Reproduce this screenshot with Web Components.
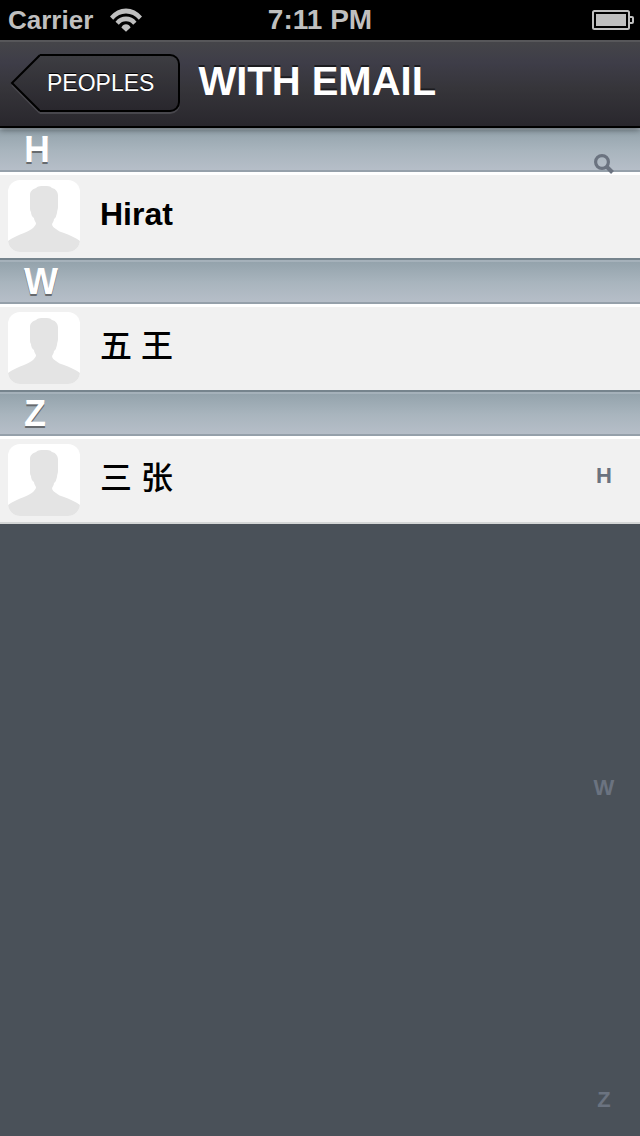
<!DOCTYPE html>
<html lang="en">
<head>
<meta charset="utf-8">
<meta name="viewport" content="width=device-width, initial-scale=1">
<title>With Email</title>
<style>
  body {
    margin: 0;
    background: #4a5159;
    font-family: "Liberation Sans", "Noto Sans CJK SC", sans-serif;
  }
</style>
</head>
<body>
<contacts-screen>
  <status-bar slot="status" carrier="Carrier" time="7:11 PM"></status-bar>
  <nav-bar slot="nav">
    <back-button slot="back">PEOPLES</back-button>
    WITH EMAIL
  </nav-bar>
  <contact-section id="section-h" letter="H">
    <contact-row>Hirat</contact-row>
  </contact-section>
  <contact-section id="section-w" letter="W">
    <contact-row lang="zh">五 王</contact-row>
  </contact-section>
  <contact-section id="section-z" letter="Z">
    <contact-row lang="zh">三 张</contact-row>
  </contact-section>
  <section-index slot="index" letters="HWZ"></section-index>
</contacts-screen>

<script>
class ContactsScreenElement extends HTMLElement {
  constructor() {
    super();
    this.attachShadow({ mode: 'open' });
    this.shadowRoot.innerHTML = `
      <style>
        :host {
          display: flex;
          flex-direction: column;
          min-height: 100vh;
        }

        header {
          position: relative;
          z-index: 1;
        }

        /* first section header tucks under the nav bar */
        main {
          flex: 1;
          position: relative;
          margin-top: -2px;
        }

        .list {
          border-bottom: 2px solid #d4d6d6;
        }
      </style>
      <header>
        <slot name="status"></slot>
        <slot name="nav"></slot>
      </header>
      <main>
        <div class="list"><slot></slot></div>
        <slot name="index"></slot>
      </main>
    `;
  }
}
customElements.define('contacts-screen', ContactsScreenElement);

class StatusBarElement extends HTMLElement {
  constructor() {
    super();
    this.attachShadow({ mode: 'open' });
    this.shadowRoot.innerHTML = `
      <style>
        :host {
          display: grid;
          grid-template-columns: 1fr auto 1fr;
          align-items: center;
          box-sizing: border-box;
          block-size: 40px;
          padding: 0 6px 2px;
          background: #000;
          color: #bfbfbf;
          font-weight: bold;
          line-height: 40px;
        }

        svg {
          display: block;
          fill: currentColor;
        }

        .left {
          display: flex;
          align-items: center;
          gap: 16px;
          padding-left: 2px;
          font-size: 26px;
        }

        #time {
          font-size: 28px;
        }

        .battery {
          justify-self: end;
        }
      </style>
      <div class="left">
        <span id="carrier"></span>
        <svg width="34" height="24" viewBox="0 0 34 24" aria-hidden="true">
          <path d="M1 8.500Q7.800 .5 17 .5T33 8.500L29.800 11.700Q24.500 5.500 17 5.500T4.200 11.700Z"/>
          <path d="M6.500 13.700Q10.800 8.600 17 8.600T27.500 13.700L24.200 16.700Q21.400 13.300 17 13.300T9.800 16.700Z"/>
          <path d="M12.400 19.500Q14 16.300 17 16.300T21.600 19.500L17 23.700Z"/>
        </svg>
      </div>
      <span id="time"></span>
      <svg class="battery" width="42" height="20" viewBox="0 0 42 20" aria-hidden="true">
        <rect x="1" y="1" width="36" height="18" rx="1.500" fill="none" stroke="currentColor" stroke-width="2"/>
        <rect x="4" y="4" width="30" height="12"/>
        <path d="M38 7h2q1 0 1 1v4q0 1-1 1h-2" fill="none" stroke="currentColor" stroke-width="2"/>
      </svg>
    `;
  }

  connectedCallback() {
    this.shadowRoot.querySelector('#carrier').textContent = this.getAttribute('carrier');
    this.shadowRoot.querySelector('#time').textContent = this.getAttribute('time');
  }
}
customElements.define('status-bar', StatusBarElement);

class NavBarElement extends HTMLElement {
  constructor() {
    super();
    this.attachShadow({ mode: 'open' });
    this.shadowRoot.innerHTML = `
      <style>
        :host {
          display: flex;
          align-items: center;
          gap: 18px;
          box-sizing: border-box;
          block-size: 88px;
          padding: 0 10px;
          border-top: 2px solid #57575a;
          border-bottom: 2px solid #000;
          background: linear-gradient(#454549, #3e3d48 25%, #36353a 55%, #29272d);
          box-shadow: 0 2px 6px rgba(0, 0, 0, .4);
        }

        h1 {
          margin: 0;
          padding-bottom: 6px;
          color: #fff;
          font-size: 40px;
          line-height: 44px;
          text-shadow: 0 -2px 0 #1c1c20;
          white-space: nowrap;
        }
      </style>
      <slot name="back"></slot>
      <h1><slot></slot></h1>
    `;
  }
}
customElements.define('nav-bar', NavBarElement);

class BackButtonElement extends HTMLElement {
  constructor() {
    super();
    this.attachShadow({ mode: 'open' });
    this.shadowRoot.innerHTML = `
      <style>
        :host {
          display: block;
        }

        button {
          display: flex;
          block-size: 60px;
          padding: 0;
          border: none;
          appearance: none;
          background: none;
          color: #fff;
          font: 23px "Liberation Sans", sans-serif;
          cursor: pointer;
        }

        svg {
          display: block;
        }

        .body {
          box-sizing: border-box;
          block-size: 58px;
          padding: 0 24px 0 7px;
          border: 2px solid #000;
          border-left: none;
          border-radius: 0 10px 10px 0;
          background: linear-gradient(#3d3d42, #29272d);
          box-shadow: 0 2px 0 #48474d;
          line-height: 54px;
          text-shadow: 0 -1px 0 #000;
        }
      </style>
      <button type="button">
        <svg width="30" height="60" viewBox="0 0 30 60" aria-hidden="true">
          <defs>
            <linearGradient id="fill" x2="0" y2="1">
              <stop stop-color="#3d3d42"/>
              <stop offset="1" stop-color="#29272d"/>
            </linearGradient>
          </defs>
          <path d="M2 31L30 59" fill="none" stroke="#48474d" stroke-width="2"/>
          <path d="M30 1L2 29L30 57" fill="url(#fill)" stroke="#000" stroke-width="2"/>
        </svg>
        <span class="body"><slot></slot></span>
      </button>
    `;
  }
}
customElements.define('back-button', BackButtonElement);

class ContactSectionElement extends HTMLElement {
  constructor() {
    super();
    this.attachShadow({ mode: 'open' });
    this.shadowRoot.innerHTML = `
      <style>
        :host {
          display: block;
        }

        h2 {
          box-sizing: border-box;
          block-size: 46px;
          margin: 0;
          padding: 0 24px;
          border-top: 2px solid #76848d;
          border-bottom: 2px solid #95a0aa;
          background: linear-gradient(#a5b1ba 2px, #94a3ac 2px, #a9b5be 55%, #b6bec8);
          color: #fff;
          font-size: 36px;
          line-height: 44px;
          text-shadow: 0 2px 0 #666a6e;
        }
      </style>
      <h2></h2>
      <div role="list"><slot></slot></div>
    `;
  }

  connectedCallback() {
    this.shadowRoot.querySelector('h2').textContent = this.getAttribute('letter');
  }
}
customElements.define('contact-section', ContactSectionElement);

class ContactRowElement extends HTMLElement {
  constructor() {
    super();
    this.attachShadow({ mode: 'open' });
    this.shadowRoot.innerHTML = `
      <style>
        :host {
          display: flex;
          align-items: center;
          gap: 20px;
          box-sizing: border-box;
          block-size: 86px;
          padding: 0 8px 2px;
          border-top: 3px solid #fff;
          background: #f1f1f1;
          color: #000;
          font-size: 32px;
          font-weight: bold;
          line-height: 36px;
        }

        :host(:lang(zh)) {
          font-weight: 500;
        }

        svg {
          display: block;
          border-radius: 12px;
          background: #fff;
        }

        .name {
          padding-bottom: 4px;
        }
      </style>
      <svg width="72" height="72" viewBox="0 0 72 72" aria-hidden="true">
        <path fill="#e4e4e4" d="M0 72V61C4 58 10 55 16 53C20 51 23 50 25 48C28 45 28 44 28 43C27 41 26 40 26 38C24 37 23 34 23 32C22 31 22 29 22 27V15C22 11 25 9 28 8C30 6 33 6 36 6C40 6 42 6 44 8C48 9 50 12 50 16V27C50 29 49 31 49 33C48 36 48 38 46 39C46 41 45 42 44 44C44 46 46 48 48 49C50 51 53 52 56 53C62 55 68 58 72 61V72Z"/>
      </svg>
      <span class="name"><slot></slot></span>
    `;
  }

  connectedCallback() {
    this.setAttribute('role', 'listitem');
  }
}
customElements.define('contact-row', ContactRowElement);

class SectionIndexElement extends HTMLElement {
  constructor() {
    super();
    this.attachShadow({ mode: 'open' });
    this.shadowRoot.innerHTML = `
      <style>
        /* floats over the list along its right edge */
        :host {
          position: absolute;
          inset-block: 0;
          inset-inline-end: 0;
        }

        nav {
          display: flex;
          flex-direction: column;
          align-items: center;
          justify-content: space-between;
          box-sizing: border-box;
          block-size: 100%;
          padding: 26px 24px 24px;
        }

        a {
          display: flex;
          align-items: center;
          justify-content: center;
          inline-size: 24px;
          block-size: 24px;
          color: #6b7380;
          font-size: 22px;
          font-weight: bold;
          line-height: 24px;
          text-decoration: none;
        }
      </style>
      <nav aria-label="Index">
        <a href="#search" aria-label="Search">
          <svg width="20" height="20" viewBox="0 0 20 20" fill="none" stroke="currentColor" aria-hidden="true">
            <circle cx="8" cy="8" r="6.400" stroke-width="3.200"/>
            <path d="M12.500 12.500L18.500 18.500" stroke-width="4"/>
          </svg>
        </a>
      </nav>
    `;
  }

  connectedCallback() {
    const nav = this.shadowRoot.querySelector('nav');
    for (const letter of this.getAttribute('letters')) {
      const link = document.createElement('a');
      link.href = `#section-${letter.toLowerCase()}`;
      link.textContent = letter;
      nav.append(link);
    }
  }
}
customElements.define('section-index', SectionIndexElement);
</script>
</body>
</html>
